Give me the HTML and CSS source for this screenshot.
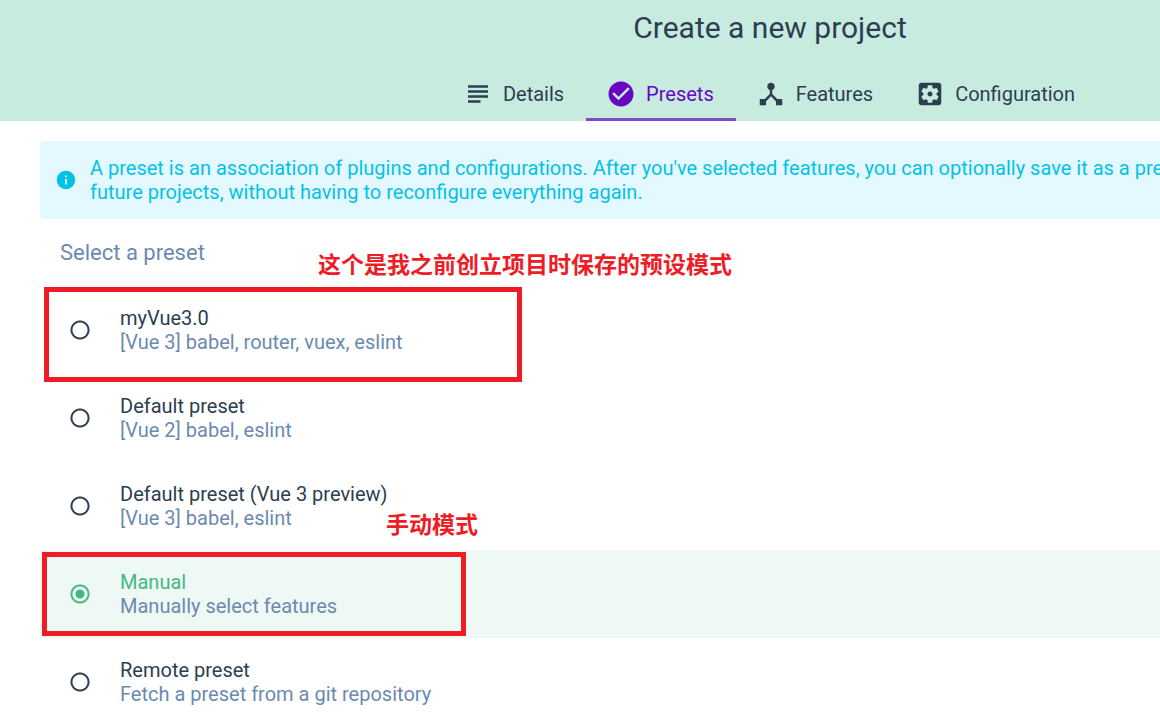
FILE: index.html
```
<!DOCTYPE html>
<html lang="en">
<head>
<meta charset="utf-8">
<title>Create a new project</title>
<link rel="stylesheet" href="styles.css">
</head>
<body>
<header class="header">
  <h1 class="title">Create a new project</h1>
  <nav class="tabs">
    <a class="tab" href="#details">
      <svg class="tab-icon" viewBox="0 0 24 24"><path d="M14 17H4v2h10v-2zm6-8H4v2h16V9zM4 15h16v-2H4v2zM4 5v2h16V5H4z"/></svg>
      <span>Details</span>
    </a>
    <a class="tab tab-active" href="#presets" aria-current="page">
      <svg class="tab-icon" viewBox="0 0 24 24"><path d="M12 2C6.48 2 2 6.48 2 12s4.480 10 10 10 10-4.480 10-10S17.520 2 12 2zm-2 15l-5-5 1.410-1.410L10 14.170l7.590-7.590L19 8l-9 9z"/></svg>
      <span>Presets</span>
    </a>
    <a class="tab" href="#features">
      <svg class="tab-icon" viewBox="0 0 24 24"><path d="M17 16l-4-4V8.820C14.160 8.400 15 7.300 15 6c0-1.660-1.340-3-3-3S9 4.340 9 6c0 1.300.840 2.400 2 2.820V12l-4 4H3v5h5v-3.050l4-4.200 4 4.200V21h5v-5h-4z"/></svg>
      <span>Features</span>
    </a>
    <a class="tab" href="#configuration">
      <svg class="tab-icon" viewBox="0 0 24 24"><path d="M12 10c-1.100 0-2 .9-2 2s.9 2 2 2 2-.9 2-2-.9-2-2-2zm7-7H5c-1.110 0-2 .9-2 2v14c0 1.100.89 2 2 2h14c1.110 0 2-.9 2-2V5c0-1.100-.89-2-2-2zm-1.750 9c0 .23-.02.460-.05.680l1.480 1.160c.13.110.17.300.08.450l-1.400 2.420c-.09.150-.27.210-.43.150l-1.740-.7c-.36.280-.76.510-1.180.690l-.26 1.850c-.03.170-.18.300-.35.300h-2.800c-.17 0-.32-.13-.35-.29l-.26-1.850c-.43-.18-.82-.41-1.180-.69l-1.740.7c-.16.060-.34 0-.43-.15l-1.400-2.420c-.09-.15-.05-.34.08-.45l1.480-1.160c-.03-.23-.05-.46-.05-.69 0-.23.020-.46.050-.68l-1.480-1.160c-.13-.11-.17-.3-.08-.45l1.400-2.420c.09-.15.270-.21.430-.15l1.740.7c.36-.28.760-.51 1.180-.69l.26-1.850c.03-.17.180-.3.350-.3h2.800c.17 0 .32.130.350.290l.26 1.850c.43.180.820.410 1.180.690l1.740-.7c.16-.06.340 0 .430.150l1.400 2.420c.09.150.050.340-.08.450l-1.480 1.160c.03.230.050.460.050.690z"/></svg>
      <span>Configuration</span>
    </a>
  </nav>
</header>
<main class="content">
  <div class="banner">
    <svg class="banner-icon" viewBox="0 0 24 24"><path d="M12 2C6.480 2 2 6.480 2 12s4.480 10 10 10 10-4.480 10-10S17.520 2 12 2zm1 15h-2v-6h2v6zm0-8h-2V7h2v2z"/></svg>
    <p class="banner-text">A preset is an association of plugins and configurations. After you've selected features, you can optionally save it as a preset so you can reuse it for<br>future projects, without having to reconfigure everything again.</p>
  </div>
  <h2 class="subtitle">Select a preset</h2>
  <div class="presets" role="radiogroup" aria-label="Select a preset">
    <label class="preset">
      <input class="radio" type="radio" name="preset">
      <span class="info"><span class="name">myVue3.0</span><span class="description">[Vue 3] babel, router, vuex, eslint</span></span>
    </label>
    <label class="preset">
      <input class="radio" type="radio" name="preset">
      <span class="info"><span class="name">Default preset</span><span class="description">[Vue 2] babel, eslint</span></span>
    </label>
    <label class="preset">
      <input class="radio" type="radio" name="preset">
      <span class="info"><span class="name">Default preset (Vue 3 preview)</span><span class="description">[Vue 3] babel, eslint</span></span>
    </label>
    <label class="preset preset-selected">
      <input class="radio" type="radio" name="preset" checked>
      <span class="info"><span class="name">Manual</span><span class="description">Manually select features</span></span>
    </label>
    <label class="preset">
      <input class="radio" type="radio" name="preset">
      <span class="info"><span class="name">Remote preset</span><span class="description">Fetch a preset from a git repository</span></span>
    </label>
  </div>
</main>
<div class="mark mark-saved"></div>
<div class="mark mark-manual"></div>
<p class="note note-saved" lang="zh-CN">这个是我之前创立项目时保存的预设模式</p>
<p class="note note-manual" lang="zh-CN">手动模式</p>
</body>
</html>
```
FILE: styles.css
```
* {
  box-sizing: border-box;
}

body {
  position: relative;
  height: 100vh;
  margin: 0;
  overflow: hidden;
  background: #fff;
  color: #2c3e50;
  font: 400 20px/24px Roboto, "Noto Sans CJK SC", sans-serif;
}

.header {
  display: flex;
  flex-direction: column;
  align-items: center;
  padding: 8px 0 0 380px;
  background: #c7ebdf;
}

.title {
  margin: 0;
  font-size: 30px;
  font-weight: 400;
  line-height: 40px;
}

.tabs {
  display: flex;
  margin-top: 19px;
}

.tab {
  display: flex;
  align-items: center;
  gap: 10px;
  height: 54px;
  padding: 0 22px 0 20px;
  border-bottom: 0 solid #7f4cc6;
  color: #2c3e50;
  text-decoration: none;
}

.tab-active {
  padding-top: 3px;
  border-bottom-width: 3px;
  color: #6806c1;
}

.tab-icon {
  flex: none;
  width: 30px;
  height: 30px;
  fill: currentColor;
}

.content {
  padding: 20px 0 0 40px;
}

.banner {
  display: flex;
  align-items: center;
  gap: 13px;
  padding: 15px;
  overflow: hidden;
  border-radius: 4px 0 0 4px;
  background: #e3f9ff;
  color: #03c2e6;
}

.banner-icon {
  flex: none;
  width: 22px;
  height: 22px;
  fill: currentColor;
}

.banner-text {
  margin: 0;
  white-space: nowrap;
}

.subtitle {
  margin: 20px 0 19px 20px;
  color: #6b8ab0;
  font-size: 22px;
  font-weight: 400;
  line-height: 28px;
}

.preset {
  display: flex;
  align-items: center;
  gap: 30px;
  padding: 20px 0 20px 30px;
}

.preset-selected {
  background: #eef8f4;
  color: #42b983;
}

.radio {
  flex: none;
  width: 20px;
  height: 20px;
  margin: 0;
  appearance: none;
  background: radial-gradient(circle, transparent 7px, currentColor 8px, currentColor 9px, transparent 10px);
  color: inherit;
}

.radio:checked {
  background: radial-gradient(circle, currentColor 4px, transparent 5px, transparent 7px, currentColor 8px, currentColor 9px, transparent 10px);
}

.info {
  display: flex;
  flex-direction: column;
}

.description {
  color: #6b8ab0;
}

/* Hand-made annotations lying over the page. */
.mark {
  position: absolute;
  border: 5px solid #ee1c25;
}

.mark-saved {
  top: 287px;
  left: 44px;
  width: 478px;
  height: 95px;
}

.mark-manual {
  top: 552px;
  left: 42px;
  width: 424px;
  height: 84px;
}

.note {
  position: absolute;
  margin: 0;
  color: #ee1c25;
  font: 700 23px/32px "Noto Sans CJK SC", sans-serif;
  white-space: nowrap;
}

.note-saved {
  top: 247px;
  left: 318px;
}

.note-manual {
  top: 507px;
  left: 386px;
}
```
